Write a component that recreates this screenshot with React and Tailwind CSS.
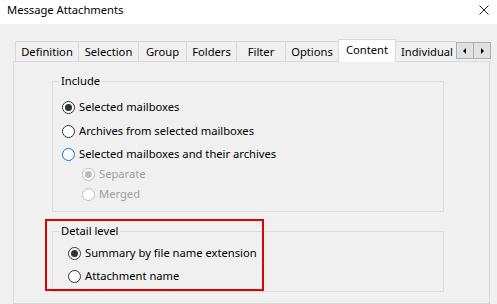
import React from "react";

function Radio({ checked = false, variant = "normal" }) {
  const ring =
    variant === "focus"
      ? "border-[#0078d7]"
      : variant === "disabled"
      ? "border-[#bcbcbc]"
      : "border-[#333333]";
  const dot = variant === "disabled" ? "bg-[#bcbcbc]" : "bg-[#333333]";
  return (
    <span
      className={`w-[13px] h-[13px] shrink-0 rounded-full border bg-white flex items-center justify-center ${ring}`}
    >
      {checked && <span className={`w-[7px] h-[7px] rounded-full ${dot}`} />}
    </span>
  );
}

function Option({ label, checked, variant, className }) {
  return (
    <div className={`h-[16px] flex items-center gap-[4px] ${className}`}>
      <Radio checked={checked} variant={variant} />
      <span className={variant === "disabled" ? "text-[#a0a0a0]" : "text-black"}>{label}</span>
    </div>
  );
}

function Tab({ label, className }) {
  return (
    <div
      className={`h-[20px] -ml-px first:ml-0 border border-b-0 border-[#d9d9d9] bg-[#f0f0f0] flex items-center justify-center leading-none ${className}`}
    >
      {label}
    </div>
  );
}

export default function App() {
  return (
    <div className="w-[497px] h-[304px] bg-[#f0f0f0] overflow-hidden relative flex flex-col text-[11.2px] text-black font-['Noto_Sans',sans-serif]">
      {/* Title bar */}
      <div className="h-[24px] shrink-0 bg-white flex items-center justify-between pl-[7px] pr-[8px] pb-[4px]">
        <span className="leading-none">Message Attachments</span>
        <svg width="10" height="10" viewBox="0 0 10 10">
          <path d="M0.5 0.5 L9.5 9.5 M9.5 0.5 L0.5 9.5" stroke="#222" strokeWidth="1" fill="none" />
        </svg>
      </div>

      {/* Tab row */}
      <div className="mt-[15px] h-[22px] shrink-0 flex items-end pl-[15px] relative z-10">
        <Tab label="Definition" className="w-[64px]" />
        <Tab label="Selection" className="w-[61px]" />
        <Tab label="Group" className="w-[49px]" />
        <Tab label="Folders" className="w-[51px]" />
        <Tab label="Filter" className="w-[50px]" />
        <Tab label="Options" className="w-[54px]" />
        <div className="h-[23px] -mb-px -ml-px w-[58px] border border-b-0 border-[#d9d9d9] bg-white flex items-start justify-center pt-[4px] leading-none">
          Content
        </div>
        <div className="h-[20px] -ml-px w-[61px] border border-b-0 border-r-0 border-[#d9d9d9] bg-[#f0f0f0] flex items-center pl-[5px] leading-none overflow-hidden">
          Individual
        </div>
        <div className="self-start mt-[3px] flex">
          <div className="w-[18px] h-[17px] border border-[#adadad] bg-[#e1e1e1] flex items-center justify-center">
            <svg width="4" height="6" viewBox="0 0 4 6">
              <path d="M3 0 L0 3 L3 6 Z" fill="#000" />
            </svg>
          </div>
          <div className="w-[18px] h-[17px] -ml-px border border-[#adadad] bg-[#e1e1e1] flex items-center justify-center">
            <svg width="4" height="6" viewBox="0 0 4 6">
              <path d="M1 0 L4 3 L1 6 Z" fill="#000" />
            </svg>
          </div>
        </div>
      </div>

      {/* Panel */}
      <div className="ml-[13px] w-[477px] flex-1 border border-[#d9d9d9] bg-[#f0f0f0] flex flex-col pl-[38px] pt-[19px]">
        {/* Include group */}
        <div className="relative w-[392px] h-[131px] shrink-0 border border-[#dcdcdc] pl-[9px] pt-[17px] flex flex-col">
          <span className="absolute left-[6px] top-[-9px] px-[2px] bg-[#f0f0f0] leading-[16px]">Include</span>
          <Option label="Selected mailboxes" checked />
          <Option label="Archives from selected mailboxes" className="mt-[8px]" />
          <Option label="Selected mailboxes and their archives" variant="focus" className="mt-[7px]" />
          <Option label="Separate" checked variant="disabled" className="mt-[4px] ml-[20px]" />
          <Option label="Merged" variant="disabled" className="mt-[4px] ml-[20px]" />
        </div>

        {/* Detail level group */}
        <div className="relative w-[392px] h-[61px] shrink-0 mt-[19px] border border-[#dcdcdc] pl-[15px] pt-[13px] flex flex-col">
          <span className="absolute left-[6px] top-[-9px] px-[2px] bg-[#f0f0f0] leading-[16px]">Detail level</span>
          <Option label="Summary by file name extension" checked />
          <Option label="Attachment name" className="mt-[7px]" />
        </div>
      </div>

      {/* Red annotation box */}
      <div className="absolute left-[45px] top-[219px] w-[219px] h-[72px] border-2 border-[#e00000] pointer-events-none" />
    </div>
  );
}
